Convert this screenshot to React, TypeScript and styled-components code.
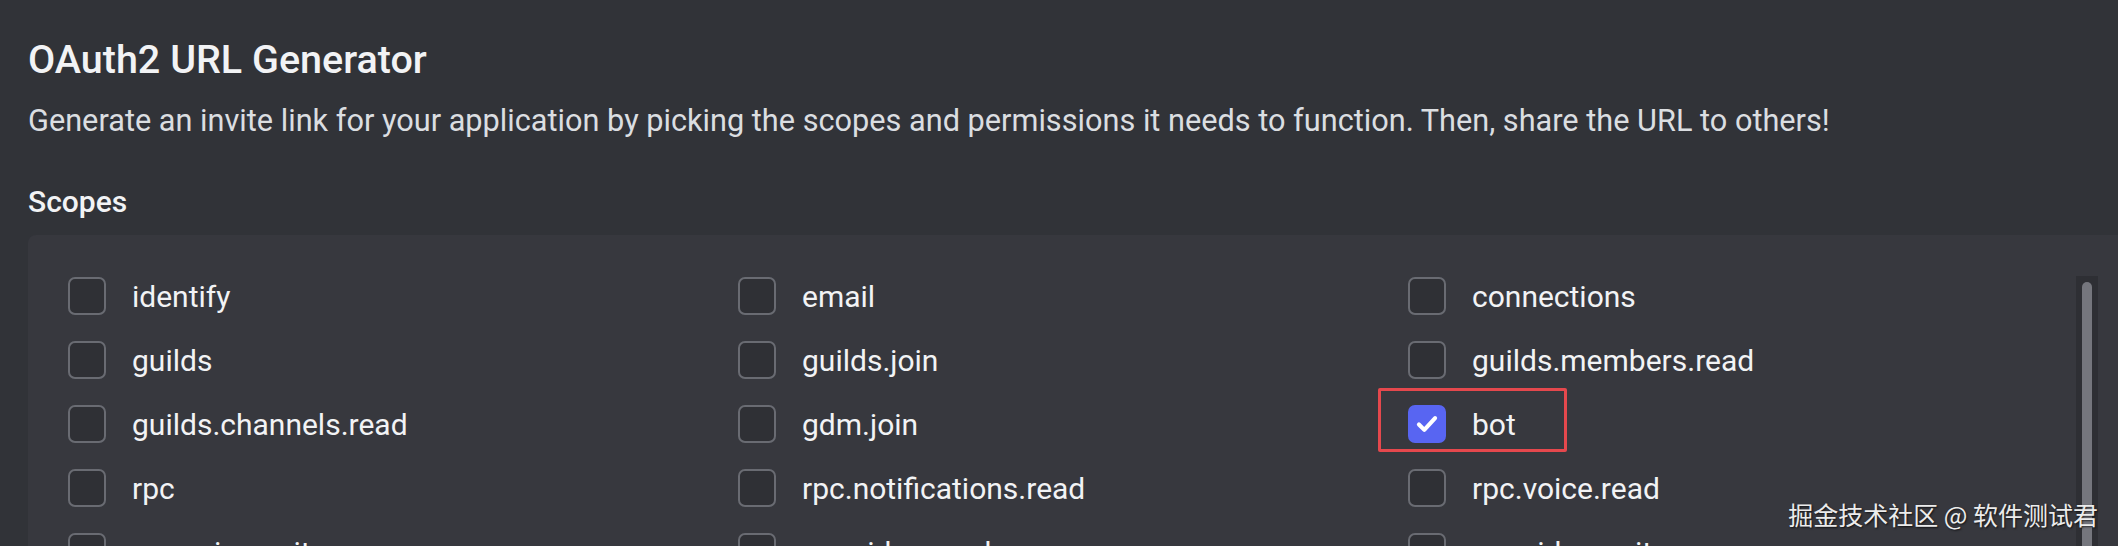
import styled, { createGlobalStyle } from "styled-components";

const scopes: string[] = [
    "identify", "email", "connections",
    "guilds", "guilds.join", "guilds.members.read",
    "guilds.channels.read", "gdm.join", "bot",
    "rpc", "rpc.notifications.read", "rpc.voice.read",
    "rpc.voice.write", "rpc.video.read", "rpc.video.write",
    "rpc.screenshare.read", "rpc.screenshare.write", "rpc.activities.write",
];

const checked = ["bot"];
const highlighted = "bot";

const GlobalStyle = createGlobalStyle`
    html, body {
        margin: 0;
        padding: 0;
        background: #313338;
        overflow: hidden;
    }
    body {
        font-family: Roboto, "Noto Sans", sans-serif;
        -webkit-font-smoothing: antialiased;
    }
`;

const Page = styled("div")`
    position: relative;
    height: 546px;
    overflow: hidden;
    padding: 36px 0 0 28px;
    box-sizing: border-box;
    background: #313338;
`;

const Title = styled("h1")`
    margin: 0;
    font-size: 39.5px;
    line-height: 48px;
    font-weight: 500;
    color: #f2f3f5;
`;

const Description = styled("p")`
    margin: 17px 0 0;
    font-size: 30.7px;
    line-height: 40px;
    font-weight: 400;
    color: #dbdee1;
`;

const Heading = styled("h2")`
    margin: 41px 0 0;
    font-size: 30px;
    line-height: 40px;
    font-weight: 500;
    color: #f2f3f5;
`;

const Panel = styled("div")`
    display: flex;
    margin-top: 13px;
    padding: 29px 20px 0 40px;
    background: #37383e;
    border-radius: 8px 0 0 0;
    min-height: 400px;
`;

const Grid = styled("div")`
    display: grid;
    grid-template-columns: repeat(3, 670px);
    grid-auto-rows: 64px;
    width: 2010px;
`;

const Item = styled("label")`
    position: relative;
    display: flex;
    align-items: center;
    gap: 26px;
    font-size: 30px;
    font-weight: 400;
    color: #f2f3f5;
    cursor: pointer;
`;

const Marker = styled("span")`
    position: absolute;
    left: -30px;
    top: -4px;
    width: 189px;
    height: 64px;
    border: 3px solid #e5484d;
    border-radius: 2px;
    box-sizing: border-box;
    pointer-events: none;
`;

const Box = styled("span")<{ $on?: boolean }>`
    display: flex;
    align-items: center;
    justify-content: center;
    flex: none;
    width: 38px;
    height: 38px;
    box-sizing: border-box;
    border-radius: 7px;
    border: 2px solid ${p => (p.$on ? "#5865f2" : "#696b72")};
    background: ${p => (p.$on ? "#5865f2" : "#2f3035")};
`;

const ScrollTrack = styled("div")`
    flex: none;
    width: 22px;
    margin: 12px 0 0 -2px;
    padding: 6px;
    box-sizing: border-box;
    background: #2e2f34;
`;

const ScrollThumb = styled("div")`
    height: 400px;
    border-radius: 6px;
    background: #75767d;
`;

const Watermark = styled("div")`
    position: absolute;
    right: 20px;
    bottom: 18px;
    font-family: "Noto Sans CJK SC", sans-serif;
    font-size: 25px;
    line-height: 28px;
    color: #ececec;
    text-shadow: 1px 1px 2px rgba(0, 0, 0, 0.7);
    pointer-events: none;
`;

const Check = () => (
    <svg width="28" height="28" viewBox="0 0 26 26" fill="none">
        <path d="M5.5 13.5 L10.5 18.5 L20.5 7.5" stroke="#fff" strokeWidth="3.8" strokeLinecap="round" strokeLinejoin="round" />
    </svg>
);

const App = () => {
    return (
        <>
            <GlobalStyle />
            <Page>
                <Title>OAuth2 URL Generator</Title>
                <Description>
                    Generate an invite link for your application by picking the scopes and permissions it needs to function. Then, share the URL to others!
                </Description>
                <Heading>Scopes</Heading>
                <Panel>
                    <Grid>
                        {scopes.map((s) => {
                            const on = checked.includes(s);
                            return (
                                <Item key={s}>
                                    {s === highlighted && <Marker />}
                                    <Box $on={on}>{on && <Check />}</Box>
                                    {s}
                                </Item>
                            );
                        })}
                    </Grid>
                    <ScrollTrack>
                        <ScrollThumb />
                    </ScrollTrack>
                </Panel>
                <Watermark>掘金技术社区 @ 软件测试君</Watermark>
            </Page>
        </>
    );
};

export default App;
